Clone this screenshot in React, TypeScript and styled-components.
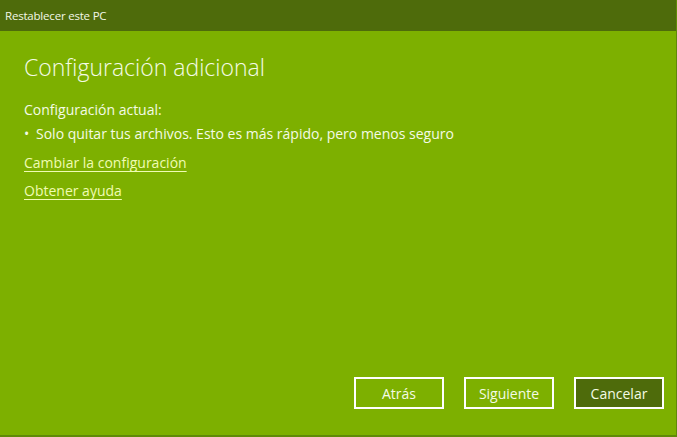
import styled, { createGlobalStyle } from "styled-components";

const GlobalStyle = createGlobalStyle`
    html, body {
        margin: 0;
        padding: 0;
        background: #7db000;
    }
    * {
        box-sizing: border-box;
    }
`;

const Window = styled.div`
    width: 677px;
    height: 437px;
    display: flex;
    flex-direction: column;
    background-color: #7db000;
    border-right: 1px solid #5f8a08;
    border-bottom: 2px solid #5f8a08;
    font-family: "Open Sans", "Noto Sans", sans-serif;
    color: #f4fbe6;
`;

const TitleBar = styled.div`
    height: 31px;
    flex-shrink: 0;
    background-color: #4e6b0b;
    display: flex;
    align-items: center;
    padding-left: 5px;
    font-size: 11.5px;
    color: #f2f7e6;
    letter-spacing: -0.2px;
`;

const Content = styled.div`
    flex: 1;
    display: flex;
    flex-direction: column;
    padding: 21px 24px 0;
`;

const Heading = styled.h1`
    margin: 0 0 17px;
    font-size: 23px;
    font-weight: 300;
    line-height: 30px;
    color: #f4fbe6;
`;

const Text = styled.p`
    margin: 0;
    font-size: 14px;
    line-height: 21px;
`;

const BulletList = styled.ul`
    margin: 3px 0 8px;
    padding: 0 0 0 12px;
    list-style: none;
    font-size: 14px;
    line-height: 21px;
`;

const Bullet = styled.li`
    position: relative;
    &::before {
        content: "•";
        position: absolute;
        left: -12px;
    }
`;

const Link = styled.a`
    display: block;
    font-size: 14px;
    line-height: 21px;
    margin-bottom: 7px;
    color: #f0fcb4;
    text-decoration: underline;
    text-underline-offset: 3px;
    width: fit-content;
`;

const Footer = styled.div`
    display: flex;
    justify-content: flex-end;
    gap: 20px;
    padding: 0 12px 26px 0;
`;

type ButtonProps = {
    $primary?: boolean;
};

const Button = styled.button<ButtonProps>`
    width: 90px;
    height: 32px;
    border: 2px solid #ffffff;
    background-color: ${props => props.$primary ? '#4e6b0b' : 'transparent'};
    color: #f4fbe6;
    font-family: "Open Sans", "Noto Sans", sans-serif;
    font-size: 14px;
    padding: 0;
    cursor: pointer;
`;

export default function App() {
    return <>
        <GlobalStyle />
        <Window>
            <TitleBar>Restablecer este PC</TitleBar>
            <Content>
                <Heading>Configuración adicional</Heading>
                <Text>Configuración actual:</Text>
                <BulletList>
                    <Bullet>Solo quitar tus archivos. Esto es más rápido, pero menos seguro</Bullet>
                </BulletList>
                <Link href="#">Cambiar la configuración</Link>
                <Link href="#">Obtener ayuda</Link>
            </Content>
            <Footer>
                <Button>Atrás</Button>
                <Button>Siguiente</Button>
                <Button $primary>Cancelar</Button>
            </Footer>
        </Window>
    </>
}
